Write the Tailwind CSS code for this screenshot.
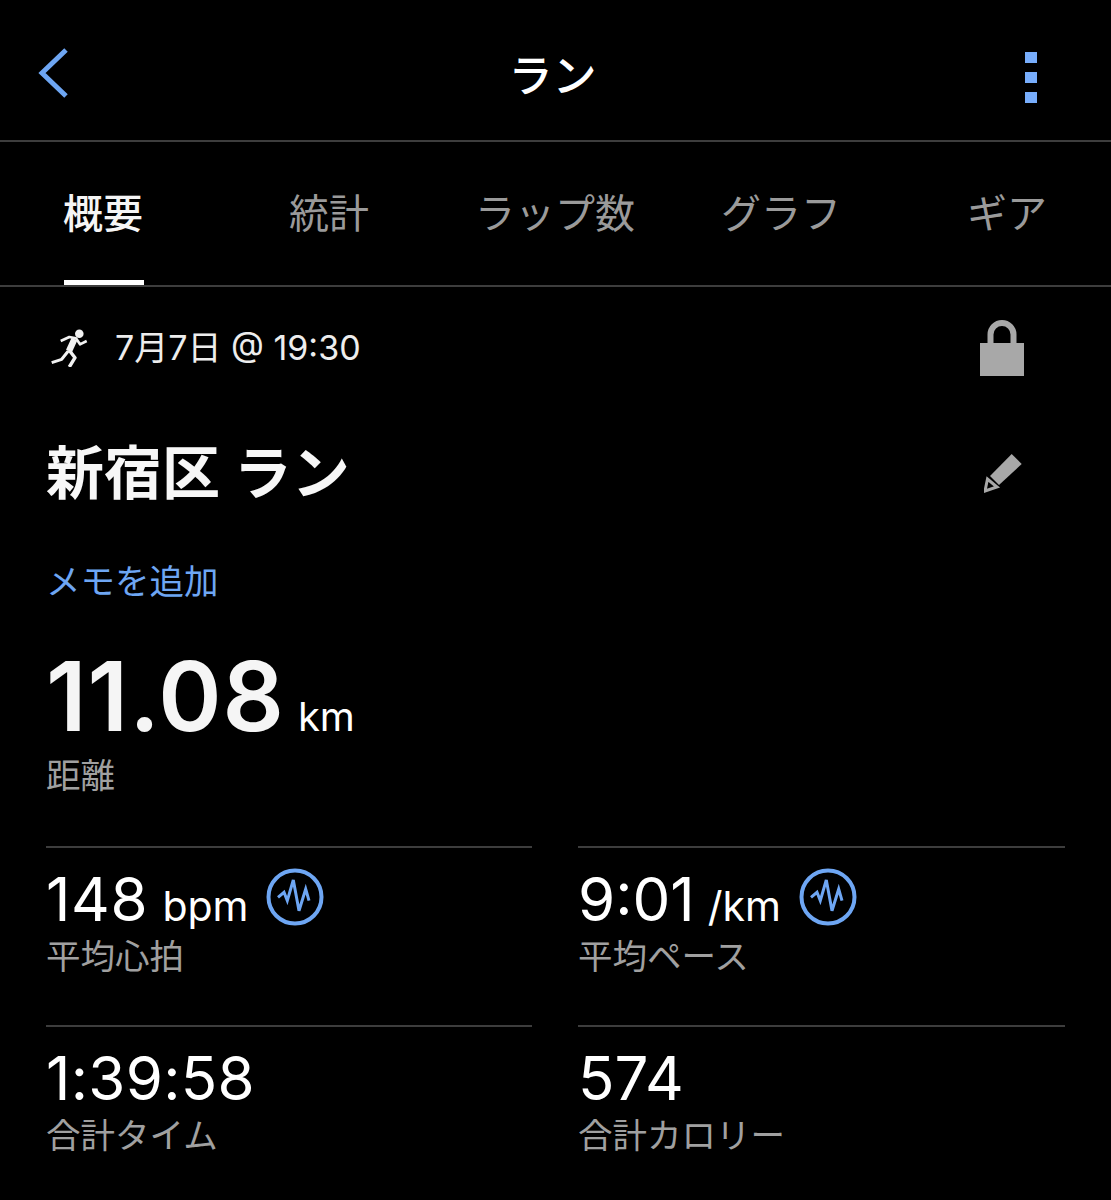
<!DOCTYPE html>
<html lang="ja">
<head>
  <meta charset="UTF-8">
  <title>ラン</title>
  <script src="https://cdn.jsdelivr.net/npm/@tailwindcss/browser@4"></script>
</head>
<body class="bg-black text-white font-['Inter','Noto_Sans_CJK_JP',sans-serif] w-[1111px] h-[1200px] overflow-hidden">
  <!-- header -->
  <header class="h-[142px] border-b-2 border-[#3d3d3d] flex items-center justify-between pl-[38px] pr-[74px]">
    <svg class="w-[32px] h-[50px] mt-[6px]" viewBox="0 0 32 50" fill="none" stroke="#6ea6f3" stroke-width="5"><path d="M28 2 L4 25 L28 48"/></svg>
    <h1 class="text-[44px] font-medium leading-none pl-[10px] mt-[12px]">ラン</h1>
    <div class="flex flex-col gap-[9px] mt-[14px]">
      <span class="w-[12px] h-[11px] bg-[#78aefc]"></span>
      <span class="w-[12px] h-[11px] bg-[#78aefc]"></span>
      <span class="w-[12px] h-[11px] bg-[#78aefc]"></span>
    </div>
  </header>

  <!-- tabs -->
  <nav class="h-[145px] border-b-2 border-[#3d3d3d] flex ml-[-10px] text-[40px] text-[#9a9a9a] leading-none">
    <a class="w-[226px] shrink-0 flex justify-center pt-[52px] text-[#f5f5f5] font-medium relative">概要<span class="absolute bottom-0 left-[74px] w-[80px] h-[5px] bg-white"></span></a>
    <a class="w-[226px] shrink-0 flex justify-center pt-[52px]">統計</a>
    <a class="w-[226px] shrink-0 flex justify-center pt-[52px]">ラップ数</a>
    <a class="w-[226px] shrink-0 flex justify-center pt-[52px]">グラフ</a>
    <a class="w-[226px] shrink-0 flex justify-center pt-[52px]">ギア</a>
  </nav>

  <main class="px-[46px]">
    <!-- date row -->
    <div class="flex items-center justify-between h-[122px] pr-[41px]">
      <div class="flex items-center gap-[27px] pl-[5px]">
        <svg class="w-[37px] h-[38px]" viewBox="0 0 37 38" fill="none" stroke="#f2f2f2" stroke-linejoin="round">
          <circle cx="28.3" cy="4.7" r="4.3" fill="#f2f2f2" stroke="none"/>
          <path d="M9.7 12 L18.3 8 L25 9.3 L29 15.3 L35.7 12" stroke-width="2.6"/>
          <path d="M23.5 10 L18 22" stroke-width="6.5"/>
          <path d="M17.3 22 L10.7 30.3 L0.7 33.7" stroke-width="3"/>
          <path d="M18 21 L24 28.7 L18.3 38" stroke-width="3.4"/>
        </svg>
        <span class="text-[34px] leading-none text-[#ededed]">7月7日 @ 19:30</span>
      </div>
      <svg class="w-[44px] h-[57px]" viewBox="0 0 44 57" fill="none">
        <path d="M10.5 26 V14.5 a11.5 11.5 0 0 1 23 0 V26" stroke="#a8a8a8" stroke-width="6"/>
        <rect x="0" y="23" width="44" height="33" fill="#a8a8a8"/>
      </svg>
    </div>

    <!-- title -->
    <div class="flex items-center justify-between h-[128px] pr-[43px]">
      <h2 class="text-[58px] font-bold leading-none text-[#f7f7f7]">新宿区 ラン</h2>
      <svg class="w-[38px] h-[40px]" viewBox="0 0 38 40" fill="none">
        <path d="M27.7 1 L37.7 11 L15 32 L6 23 Z" fill="#a8a8a8"/>
        <path d="M3.5 26 L1 38 L13 34 Z" stroke="#a8a8a8" stroke-width="3"/>
      </svg>
    </div>

    <a class="block text-[34.5px] leading-none text-[#6ea6f3] mt-[28px]">メモを追加</a>

    <!-- distance -->
    <div class="flex items-baseline mt-[48px] leading-none">
      <span class="text-[96px] font-semibold leading-none tracking-[1px] text-[#f5f5f5]">11.08</span>
      <span class="text-[40px] ml-[13px]">km</span>
    </div>
    <p class="text-[34.5px] leading-none text-[#a0a0a0] mt-[15px]">距離</p>

    <!-- stats -->
    <div class="grid grid-cols-[486px_487px] gap-x-[46px] mt-[53px]">
      <div class="border-t-2 border-[#3d3d3d] h-[179px] pt-[18px]">
        <div class="flex items-center h-[66px]">
          <span class="text-[60px] leading-none tracking-[0.7px]">148</span>
          <span class="text-[41px] leading-none ml-[14px] mt-[14px]">bpm</span>
          <svg class="w-[58px] h-[58px] ml-[17px] mb-[4px]" viewBox="0 0 58 58" fill="none" stroke="#6ea6f3"><circle cx="29" cy="29" r="26.5" stroke-width="4"/><path d="M12 29.3 L18 24.3 L21.3 32.7 L27.3 12 L33 42.7 L39.7 21 L43 32.7" stroke-width="3"/></svg>
        </div>
        <p class="text-[34.5px] leading-none text-[#a0a0a0] mt-[8px]">平均心拍</p>
      </div>
      <div class="border-t-2 border-[#3d3d3d] h-[179px] pt-[18px]">
        <div class="flex items-center h-[66px]">
          <span class="text-[60px] leading-none">9:01</span>
          <span class="text-[41px] leading-none ml-[13px] mt-[14px]">/km</span>
          <svg class="w-[58px] h-[58px] ml-[18px] mb-[4px]" viewBox="0 0 58 58" fill="none" stroke="#6ea6f3"><circle cx="29" cy="29" r="26.5" stroke-width="4"/><path d="M12 29.3 L18 24.3 L21.3 32.7 L27.3 12 L33 42.7 L39.7 21 L43 32.7" stroke-width="3"/></svg>
        </div>
        <p class="text-[34.5px] leading-none text-[#a0a0a0] mt-[8px]">平均ペース</p>
      </div>
      <div class="border-t-2 border-[#3d3d3d] pt-[18px]">
        <div class="flex items-center h-[66px]"><span class="text-[60px] leading-none tracking-[0.3px]">1:39:58</span></div>
        <p class="text-[34.5px] leading-none text-[#a0a0a0] mt-[8px]">合計タイム</p>
      </div>
      <div class="border-t-2 border-[#3d3d3d] pt-[18px]">
        <div class="flex items-center h-[66px]"><span class="text-[60px] leading-none">574</span></div>
        <p class="text-[34.5px] leading-none text-[#a0a0a0] mt-[8px]">合計カロリー</p>
      </div>
    </div>
  </main>
</body>
</html>
